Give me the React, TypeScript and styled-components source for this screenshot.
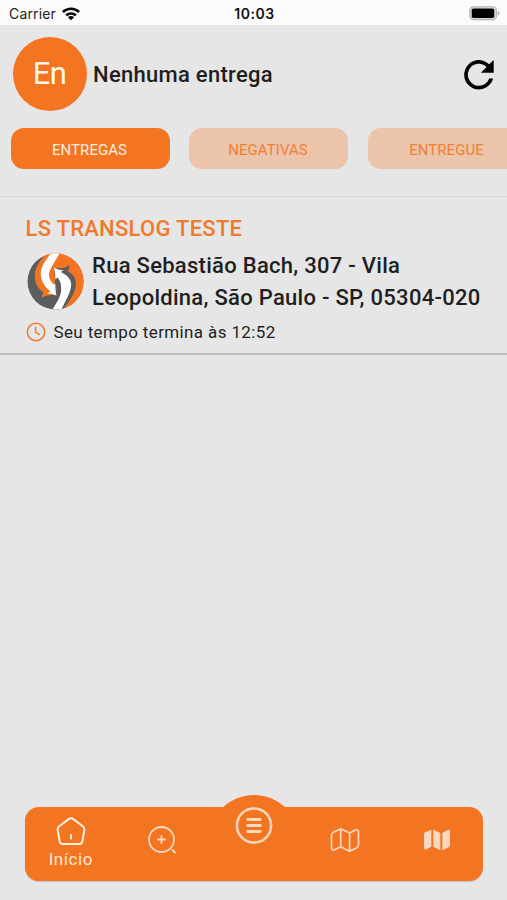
import React from "react";
import styled, { createGlobalStyle } from "styled-components";

const ORANGE = "#f47521";
const CREAM = "#fcd8bf";

const GlobalStyle = createGlobalStyle`
  * { box-sizing: border-box; }
  body { margin: 0; background: #e6e6e6; font-family: Roboto, sans-serif; }
  button { font-family: inherit; border: 0; padding: 0; background: none; }
  svg { display: block; flex: none; }
`;

const Screen = styled.div`
  width: 507px;
  height: 900px;
  display: flex;
  flex-direction: column;
  overflow: hidden;
  background: #e6e6e6;
  color: #1f1f21;
`;

const StatusBar = styled.header`
  height: 25px;
  flex: none;
  display: grid;
  grid-template-columns: 1fr auto 1fr;
  align-items: center;
  padding: 2px 7px 0 9px;
  background: #fbfbfb;
  font: 400 14px/20px Inter, sans-serif;
  color: #222;
`;

const Carrier = styled.div`
  display: flex;
  align-items: center;
  gap: 6px;
  letter-spacing: 0.15px;
`;

const Clock = styled.div`
  font-weight: 600;
  font-size: 14px;
  letter-spacing: 0.5px;
  color: #111;
`;

const Battery = styled.div`
  justify-self: end;
`;

const Heading = styled.section`
  height: 98px;
  flex: none;
  display: flex;
  align-items: center;
  padding: 0 12px 0 13px;
`;

const Avatar = styled.div`
  width: 74px;
  height: 74px;
  border-radius: 50%;
  display: grid;
  place-items: center;
  padding: 0 1px 2px 0;
  background: ${ORANGE};
  color: #fff4e9;
  font-size: 31px;
  letter-spacing: -0.6px;
`;

const Title = styled.h1`
  flex: 1;
  margin: 0 0 0 6px;
  font-size: 22px;
  font-weight: 500;
  letter-spacing: 0.28px;
`;

const Tabs = styled.nav`
  height: 74px;
  flex: none;
  display: flex;
  align-items: flex-start;
  gap: 19.5px;
  padding: 5px 0 0 10.5px;
  overflow: hidden;
  border-bottom: 1px solid #dadada;
`;

const Tab = styled.button<{ $active?: boolean }>`
  width: 159px;
  height: 41px;
  flex: none;
  border-radius: 13px;
  font-size: 15px;
  letter-spacing: 0.05px;
  padding: 2px 1px 0 0;
  background: ${(p) => (p.$active ? ORANGE : "#ebc4aa")};
  color: ${(p) => (p.$active ? "#fff0e0" : "#f07f35")};
`;

const Card = styled.article`
  height: 157.5px;
  flex: none;
  padding: 16px 20px 0 25.5px;
  border-bottom: 2px solid #bcbcbc;
`;

const Company = styled.h2`
  margin: 0;
  font-size: 22px;
  line-height: 31px;
  font-weight: 500;
  letter-spacing: 0.27px;
  color: #f07a2b;
`;

const AddressRow = styled.div`
  display: flex;
  align-items: center;
  gap: 8px;
  padding: 6px 0 0 1.5px;
`;

const Address = styled.p`
  margin: 0;
  font-size: 22px;
  line-height: 31.5px;
  font-weight: 500;
  letter-spacing: 0.28px;
  white-space: nowrap;
`;

const Deadline = styled.div`
  display: flex;
  align-items: center;
  gap: 7.5px;
  height: 24px;
  margin-top: 7px;
  padding-left: 0.5px;
  font-size: 17px;
  letter-spacing: 0.37px;
`;

const BottomArea = styled.footer`
  margin: auto 24.5px 19px 25px;
`;

const NavBar = styled.nav`
  position: relative;
  height: 74px;
  display: grid;
  grid-template-columns: repeat(5, 1fr);
  border-radius: 14px;
  background: ${ORANGE};
  box-shadow: 0 1px 1px rgba(80, 80, 80, 0.25);
`;

const Bump = styled.div`
  position: absolute;
  left: 50%;
  top: -12px;
  width: 62px;
  height: 12.5px;
  margin-left: -31px;
  overflow: hidden;

  &::before {
    content: "";
    position: absolute;
    left: -15px;
    top: 0;
    width: 92px;
    height: 92px;
    border-radius: 50%;
    background: ${ORANGE};
  }
`;

const NavItem = styled.button<{ $pad: number }>`
  position: relative;
  display: flex;
  flex-direction: column;
  align-items: center;
  padding-top: ${(p) => p.$pad}px;
  color: ${CREAM};
`;

const NavLabel = styled.span`
  margin-top: 3px;
  font-size: 17px;
  line-height: 20px;
  letter-spacing: 0.55px;
  color: #ffead7;
`;

const Wifi = () => (
  <svg width="18" height="14" viewBox="0 0 18 14" fill="none" stroke="#080808" strokeWidth="2.5">
    <path d="M.9 5a11.5 11.5 0 0 1 16.2 0M4.1 8.4a7 7 0 0 1 9.8 0" />
    <path d="M9 13.3 5.9 10.3a4.4 4.4 0 0 1 6.2 0Z" fill="#080808" stroke="none" />
  </svg>
);

const BatteryIcon = () => (
  <svg width="31" height="15" viewBox="0 0 31 15">
    <rect x=".9" y=".9" width="26.4" height="12.6" rx="3.5" fill="#e8e8e8" stroke="#b3b3b3" strokeWidth="1.3" />
    <rect x="2.7" y="2.5" width="22.6" height="9.5" rx="1.7" fill="#000" />
    <path d="M28.7 5v4.6q1.8-.8 1.8-2.3T28.7 5Z" fill="#aaa" />
  </svg>
);

const Refresh = () => (
  <svg width="31" height="31" viewBox="0 0 31 31">
    <path
      d="M25.2 5.3A14.7 14.7 0 1 0 29.1 19.4H25.2A11 11 0 1 1 22.6 7.9L16.9 13.7H29.7V1Z"
      fill="#050505"
    />
  </svg>
);

const Logo = () => (
  <svg width="57" height="57" viewBox="82 40 170 170">
    <defs>
      <clipPath id="disc">
        <circle cx="167" cy="125" r="84" />
      </clipPath>
    </defs>
    <g clipPath="url(#disc)">
      <circle cx="167" cy="125" r="84" fill="#5b5d5e" />
      <path d="M146 35H255V215H184C207 188 226 160 227 132C228 114 218 102 204 95L209 77Q187 91 163 84L170 132L168 166Q145 162 125 173L131 158C115 146 105 130 105 107C106 78 125 58 146 35Z" fill={ORANGE} />
      <path d="M163 84Q187 91 209 77L203 95C219 103 228 115 227 132C226 161 206 187 184 215H154L180 160L166 132Z" fill="#5b5d5e" />
      <path d="M157 35L151 44C136 65 123 82 123 102C124 126 136 142 152 155L142 161Q156 160 170 167Q165 149 166 132L162 134C149 123 144 107 150 93C155 80 166 65 180 40V35Z" fill="#fff" />
      <path d="M162 84Q177 92 192 91L183 97C201 106 213 117 214 134C213 161 193 187 182 215H155L160 205C172 185 184 168 184 147C184 131 180 121 173 113L166 119Q168 102 162 84Z" fill="#fff" />
    </g>
  </svg>
);

const ClockIcon = () => (
  <svg width="20" height="20" viewBox="0 0 20 20" fill="none" stroke="#f07d34" strokeLinecap="round" strokeLinejoin="round">
    <circle cx="10" cy="10" r="8.7" strokeWidth="1.6" />
    <path d="M9.6 5.3V10.2L13.3 12.5" strokeWidth="1.5" />
  </svg>
);

const Home = () => (
  <svg width="30" height="29" viewBox="0 0 30 29" fill="none" stroke="#fff0e3" strokeWidth="2" strokeLinejoin="round" strokeLinecap="round">
    <path d="M12.7 2.1 3.2 9.2Q1.4 10.6 1.7 13L3.6 24.2Q4.2 27 7 27H23Q25.800 27 26.4 24.2L28.3 13Q28.6 10.6 26.8 9.2L17.3 2.1Q15 .5 12.7 2.1ZM15 18V21.5" />
  </svg>
);

const SearchPlus = () => (
  <svg width="30" height="30" viewBox="0 0 30 30" fill="none" stroke="currentColor" strokeWidth="1.8" strokeLinecap="round">
    <circle cx="14.5" cy="14.5" r="12.5" />
    <path d="M14.5 11V18M11 14.5H18M25.5 25 28 27.5" />
  </svg>
);

const Menu = () => (
  <svg width="38" height="38" viewBox="0 0 38 38" fill="none" stroke="currentColor" strokeLinecap="round">
    <circle cx="19" cy="18.5" r="17.1" strokeWidth="2.5" />
    <path d="M12.7 12.5H25.3M12.7 18.5H25.3M12.7 24.5H25.3" strokeWidth="2.9" />
  </svg>
);

const MapOutline = () => (
  <svg width="30" height="26" viewBox="0 0 30 26" fill="none" stroke="currentColor" strokeWidth="1.7" strokeLinejoin="round">
    <path d="M10.7 1.8 19.6 6 25.5 3Q28.5 2 28.5 5V17.5Q28.5 20 26.5 21L19.6 24.300 10.7 19.8 4.500 22.8Q1.5 24 1.5 20.5V8.5Q1.5 6.2 3.500 5.2ZM10.7 1.8V19.8M19.6 6V24.3" />
  </svg>
);

const MapFilled = () => (
  <svg width="28" height="26" viewBox="0 0 28 26" fill="currentColor">
    <path d="M8.300 2.8V19.6L3.7 22.3Q1 23.5 1 20.5V7.5Q1 5.7 2.7 4.9ZM10.3 2.5 17.3 6V23.2L10.3 19.7ZM19.4 5.9 24.5 3Q27 2 27 4.8V17.5Q27 19.7 25 20.8L19.4 23.3Z" />
  </svg>
);

export default function App() {
  return (
    <Screen>
      <GlobalStyle />
      <StatusBar>
        <Carrier>
          Carrier <Wifi />
        </Carrier>
        <Clock>10:03</Clock>
        <Battery>
          <BatteryIcon />
        </Battery>
      </StatusBar>
      <Heading>
        <Avatar>En</Avatar>
        <Title>Nenhuma entrega</Title>
        <Refresh />
      </Heading>
      <Tabs>
        <Tab $active>ENTREGAS</Tab>
        <Tab>NEGATIVAS</Tab>
        <Tab>ENTREGUE</Tab>
      </Tabs>
      <Card>
        <Company>LS TRANSLOG TESTE</Company>
        <AddressRow>
          <Logo />
          <Address>
            Rua Sebastião Bach, 307 - Vila
            <br />
            Leopoldina, São Paulo - SP, 05304-020
          </Address>
        </AddressRow>
        <Deadline>
          <ClockIcon />
          Seu tempo termina às 12:52
        </Deadline>
      </Card>
      <BottomArea>
        <NavBar>
          <Bump />
          <NavItem $pad={10}>
            <Home />
            <NavLabel>Início</NavLabel>
          </NavItem>
          <NavItem $pad={18}>
            <SearchPlus />
          </NavItem>
          <NavItem $pad={0}>
            <Menu />
          </NavItem>
          <NavItem $pad={20}>
            <MapOutline />
          </NavItem>
          <NavItem $pad={20}>
            <MapFilled />
          </NavItem>
        </NavBar>
      </BottomArea>
    </Screen>
  );
}
